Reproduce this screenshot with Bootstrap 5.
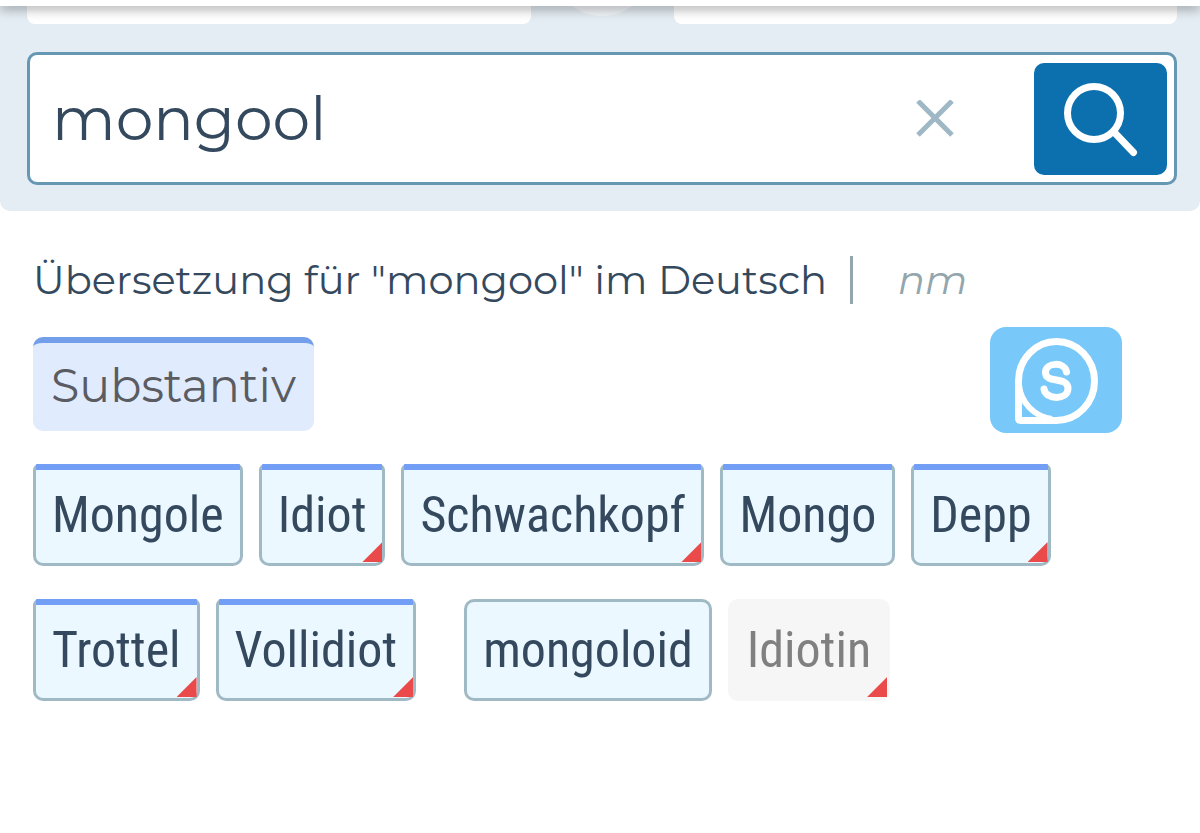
<!DOCTYPE html>
<html lang="de">
<head>
<meta charset="utf-8">
<meta name="viewport" content="width=device-width, initial-scale=1">
<title>mongool – Übersetzung</title>
<link href="https://cdn.jsdelivr.net/npm/bootstrap@5.3.0/dist/css/bootstrap.min.css" rel="stylesheet">
<style>
  body { font-family: Montserrat, Inter, "Open Sans", sans-serif; font-weight: 400; color: #34495e; background: #fff; }
  .top-strip { height: 6px; background: #fff; box-shadow: 0 2px 12px rgba(0,0,0,.5); z-index: 2; }
  .search-panel { background: #e4edf3; border-radius: 0 0 10px 10px; padding: 0 23px 26px 27px; }
  .lang-row { height: 18px; margin-bottom: 28px; overflow: hidden; }
  .lang-box { background: #fff; border-radius: 0 0 8px 8px; }
  .lang-swap { width: 143px; }
  .swap-disc { width: 100px; height: 100px; margin-top: -90px; border-radius: 50%; background: #f3f6f9; }
  .search-box { border: 3px solid #6698b4; border-radius: 10px; padding: 8px 7px 7px 22px; background: #fff; }
  .search-field { font-size: 60px; line-height: 80px; font-weight: 400; color: #34495e; padding: 0; min-width: 0; }
  .search-field:focus { box-shadow: none; }
  .clear-btn { width: 38px; height: 38px; margin-right: 80px; line-height: 0; }
  .search-btn { width: 133px; height: 112px; border-radius: 10px; background: #0b70ad; }
  .results { padding: 45px 33px 0; }
  .headline { font-size: 40px; line-height: 48px; font-weight: 400; }
  .gender { font-size: 40px; line-height: 48px; border-left: 3px solid #93a5ad; color: #93a5ad; margin-left: 23px; padding-left: 45px; }
  .pos-row { margin-top: 23px; padding-right: 45px; }
  .pos-tag { font-size: 46px; line-height: 86px; color: #5a5c62; background: #e0ebfd; border-top: 6px solid #739ee9; border-radius: 10px; margin-top: 10px; padding: 0 18px 2px; }
  .syn-btn { width: 132px; height: 106px; border-radius: 16px; background: #78c8fa; }
  .chips { gap: 33px 16px; margin-top: 31px; }
  .chip { position: relative; font-family: "Roboto Condensed", "Liberation Sans Narrow", Roboto, sans-serif; font-size: 50px; font-weight: 400; line-height: 96px; color: #34495e; background: #ecf8ff; border: 3px solid #9fb9c5; border-radius: 10px; padding: 0 16px; text-decoration: none; }
  .chip-noun { border-top-left-radius: 6px; border-top-right-radius: 6px; }
  .chip-noun::before { content: ""; position: absolute; inset: -3px 0 auto 0; height: 6px; background: #739ef5; border-radius: 1px 1px 0 0; }
  .chip-flag::after { content: ""; position: absolute; right: 0; bottom: 1px; width: 20px; height: 20px; background: #ea4a4a; clip-path: polygon(100% 0, 100% 100%, 0 100%); }
  .chip-break { margin-left: 32px; }
  .chip-muted { background: #f6f6f6; border-color: #f6f6f6; color: #808080; }
</style>
</head>
<body>
<div class="top-strip position-relative"></div>
<header class="search-panel">
  <div class="lang-row d-flex">
    <div class="lang-box flex-fill"></div>
    <div class="lang-swap d-flex justify-content-center flex-shrink-0"><div class="swap-disc"></div></div>
    <div class="lang-box flex-fill"></div>
  </div>
  <form class="search-box d-flex align-items-center" role="search">
    <input class="search-field form-control border-0 bg-transparent flex-fill" type="text" value="mongool" aria-label="Suche">
    <button class="clear-btn btn p-0 border-0 flex-shrink-0" type="button" aria-label="Löschen">
      <svg width="38" height="38" viewBox="0 0 38 38"><path d="M2 1 36 35M36 1 2 35" stroke="#9fb8c6" stroke-width="5"/></svg>
    </button>
    <button class="search-btn btn p-0 border-0 flex-shrink-0" type="submit" aria-label="Suchen">
      <svg class="d-block" width="133" height="112" viewBox="0 0 133 112" fill="none" stroke="#fff" stroke-width="7" stroke-linecap="round"><circle cx="60" cy="50" r="26.500"/><path d="M80 69 99.500 89.500"/></svg>
    </button>
  </form>
</header>
<main class="results">
  <div class="d-flex align-items-center">
    <h1 class="headline mb-0">Übersetzung für "mongool" im Deutsch</h1>
    <em class="gender">nm</em>
  </div>
  <div class="pos-row d-flex justify-content-between align-items-start">
    <div class="pos-tag">Substantiv</div>
    <button class="syn-btn btn p-0 border-0" type="button" aria-label="Synonyme">
      <svg class="d-block" width="132" height="106" viewBox="0 0 132 106" fill="none" stroke="#fff"><path d="M28.500 54A38 39.500 0 1 1 66.500 93.500H31Q28.500 93.500 28.500 91Z" stroke-width="7"/><path d="M29 58A38 38 0 0 0 62 92" stroke-width="6"/><path d="M76.500 45C75 34.500 55.500 35 55.500 45.500C55.500 57 78 49 78 61.500C78 73.500 55.500 73 54 62" stroke-width="7" stroke-linecap="round"/></svg>
    </button>
  </div>
  <div class="chips d-flex flex-wrap">
    <a class="chip chip-noun" href="#">Mongole</a>
    <a class="chip chip-noun chip-flag" href="#">Idiot</a>
    <a class="chip chip-noun chip-flag" href="#">Schwachkopf</a>
    <a class="chip chip-noun" href="#">Mongo</a>
    <a class="chip chip-noun chip-flag" href="#">Depp</a>
    <a class="chip chip-noun chip-flag" href="#">Trottel</a>
    <a class="chip chip-noun chip-flag" href="#">Vollidiot</a>
    <a class="chip chip-break" href="#">mongoloid</a>
    <a class="chip chip-muted chip-flag" href="#">Idiotin</a>
  </div>
</main>
<script src="https://cdn.jsdelivr.net/npm/bootstrap@5.3.0/dist/js/bootstrap.bundle.min.js"></script>
</body>
</html>
